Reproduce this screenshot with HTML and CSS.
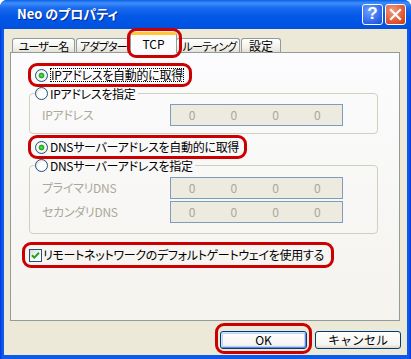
FILE: index.html
```html
<!DOCTYPE html>
<html lang="ja">
<head>
    <meta charset="UTF-8">
    <meta name="viewport" content="width=device-width, initial-scale=1.0">
    <title>Neo のプロパティ</title>
    <link rel="stylesheet" href="styles.css">
</head>
<body>
    <div class="window">
        <div class="titlebar">
            <span class="title">Neo のプロパティ</span>
            <span class="tb-btn help">?</span>
            <span class="tb-btn close">
                <svg width="19" height="19" viewBox="0 0 19 19">
                    <path d="M5 5 L14 14 M14 5 L5 14" stroke="#fff" stroke-width="2.2" stroke-linecap="square"/>
                </svg>
            </span>
        </div>

        <div class="client">
            <div class="tabs">
                <div class="tab t1">ユーザー名</div>
                <div class="tab t2">アダプター</div>
                <div class="tab active">TCP</div>
                <div class="tab t3">ルーティング</div>
                <div class="tab t4">設定</div>
            </div>

            <div class="panel">
                <div class="mark opt">
                    <span class="radio on"></span><span class="focus">IPアドレスを自動的に取得</span>
                </div>

                <fieldset class="group g1">
                    <legend class="opt"><span class="radio"></span>IPアドレスを指定</legend>
                    <div class="field">
                        <span class="label">IPアドレス</span>
                        <span class="ipbox"><span>0</span><span>0</span><span>0</span><span>0</span></span>
                    </div>
                </fieldset>

                <div class="mark opt m2">
                    <span class="radio on"></span>DNSサーバーアドレスを自動的に取得
                </div>

                <fieldset class="group g2">
                    <legend class="opt"><span class="radio"></span>DNSサーバーアドレスを指定</legend>
                    <div class="field">
                        <span class="label">プライマリDNS</span>
                        <span class="ipbox"><span>0</span><span>0</span><span>0</span><span>0</span></span>
                    </div>
                    <div class="field second">
                        <span class="label">セカンダリDNS</span>
                        <span class="ipbox"><span>0</span><span>0</span><span>0</span><span>0</span></span>
                    </div>
                </fieldset>

                <div class="mark opt m3">
                    <span class="check">
                        <svg width="11" height="11" viewBox="0 0 11 11">
                            <path d="M2 5.2 L4.3 7.6 L9 2.8" fill="none" stroke="#21A121" stroke-width="2"/>
                        </svg>
                    </span>リモートネットワークのデフォルトゲートウェイを使用する
                </div>
            </div>

            <div class="buttons">
                <button class="btn ok">OK</button>
                <button class="btn">キャンセル</button>
            </div>
        </div>
    </div>
</body>
</html>
```

FILE: styles.css
```css
* {
    box-sizing: border-box;
}

body {
    margin: 0;
    background: #fff;
    font-family: "Noto Sans CJK JP", "Liberation Sans", sans-serif;
    font-size: 12px;
    line-height: 14px;
    color: #000;
    font-feature-settings: "palt";
}

.window {
    width: 411px;
    height: 359px;
    display: flex;
    flex-direction: column;
    background: linear-gradient(to right, #0831D9 0, #0A5BEB 2px, #0A5BEB 409px, #0831D9 411px);
    border-radius: 7px 7px 0 0;
    overflow: hidden;
}

.titlebar {
    height: 29px;
    flex: none;
    display: flex;
    align-items: center;
    padding: 0 5px 1px 17px;
    background: linear-gradient(#0A5FE8 0, #3D8EF8 3px, #1A6AF0 8px, #0458E6 16px, #0054E3 24px, #0350DA 29px);
}
.title {
    flex: 1;
    color: #fff;
    font-size: 13px;
    font-weight: bold;
    text-shadow: 1px 1px #0A2B86;
}
.tb-btn {
    width: 21px;
    height: 21px;
    margin-left: 2px;
    border: 1px solid #fff;
    border-radius: 3px;
    display: flex;
    align-items: center;
    justify-content: center;
}
.help {
    background: radial-gradient(circle at 35% 30%, #6FA2FF, #2B63E8 70%, #1C4CCB);
    color: #fff;
    font-family: "Liberation Sans", sans-serif;
    font-size: 17px;
    font-weight: bold;
}
.close {
    background: radial-gradient(circle at 35% 30%, #F29B7E, #DE5430 65%, #C23A14);
}

.client {
    flex: 1;
    margin: 0 4px 4px;
    background: #ECE9D8;
    padding: 3px 7px 0 6px;
}

/* tabs */
.tabs {
    display: flex;
    align-items: flex-end;
    gap: 1px;
    height: 20px;
    padding-left: 2px;
    position: relative;
    z-index: 1;
}
.tab {
    height: 14px;
    border: 1px solid #919B9C;
    border-bottom: none;
    border-radius: 3px 3px 0 0;
    background: linear-gradient(#FFFFFF, #F3F2EC 60%, #E4E2D6);
    text-align: center;
    line-height: 14px;
    white-space: nowrap;
}
.t1, .t2, .t3 {
    font-size: 11px;
    letter-spacing: -0.8px;
}
.t1 { width: 63px; }
.t2 { width: 55px; text-align: left; padding-left: 3px; }
.t3 { width: 64px; padding-left: 3px; }
.t4 { width: 40px; }
.tab.active {
    position: relative;
    z-index: 2;
    width: 47px;
    height: 21px;
    margin: 0 -2px -1px;
    padding-top: 2px;
    border-top: 3px solid #FFC83C;
    background: #FCFCFE;
    line-height: 14px;
}
.tab.active::after {
    content: "";
    position: absolute;
    top: -7px;
    left: -4px;
    right: -6px;
    bottom: -5px;
    border: 3px solid #CC0000;
    border-radius: 9px;
}

.panel {
    height: 269px;
    border: 1px solid #919B9C;
    background: linear-gradient(#FCFCFE, #F4F3EE);
    padding: 10px 21px 0 18px;
    letter-spacing: -0.3px;
}

.mark {
    display: flex;
    align-items: center;
    width: fit-content;
    height: 24px;
    margin-left: -1px;
    padding: 0 5px 0 4px;
    border: 3px solid #CC0000;
    border-radius: 9px;
    white-space: nowrap;
}
.m2 {
    margin-top: 1px;
}
.m3 {
    height: 26px;
    margin-top: 8px;
    margin-left: -7px;
    padding-right: 7px;
}

.focus {
    outline: 1px dotted #000;
    outline-offset: -1px;
    padding: 0 1px;
}

.radio {
    display: inline-block;
    width: 13px;
    height: 13px;
    margin-right: 2px;
    border: 1px solid #1C5180;
    border-radius: 50%;
    background: radial-gradient(circle at 60% 60%, #fff 40%, #E6E5DD 75%, #D4D2C6);
    vertical-align: top;
}
.radio.on {
    background: radial-gradient(circle, #5FE25F 0, #21A121 2.5px, #E6F4E6 3.2px, #fff 45%, #E6E5DD 75%, #D4D2C6);
}
.check {
    display: inline-flex;
    align-items: center;
    justify-content: center;
    width: 13px;
    height: 13px;
    margin-right: 1px;
    border: 1px solid #1C5180;
    background: linear-gradient(135deg, #DCDBD3, #fff 70%);
}

/* group boxes */
.group {
    width: 349px;
    margin: 0;
    padding: 4px 34px 7px 12px;
    border: 1px solid #D0D0BF;
    border-radius: 4px;
    min-width: 0;
}
.g2 {
    padding-top: 5px;
    padding-bottom: 10px;
}
.group legend {
    margin-left: -7px;
    padding: 0 2px 0 0;
    line-height: 13px;
    white-space: nowrap;
}

.field {
    display: flex;
    align-items: center;
}
.field.second {
    margin-top: 2px;
}
.label {
    width: 128px;
    color: #ACA899;
}
.ipbox {
    display: flex;
    align-items: center;
    width: 173px;
    height: 22px;
    padding-right: 4px;
    border: 1px solid #7F9DB9;
    background: #EDEAE0;
    color: #ACA899;
}
.ipbox span {
    flex: 1;
    text-align: center;
}

/* bottom buttons */
.buttons {
    display: flex;
    justify-content: flex-end;
    gap: 8px;
    margin: 10px -1px 0 0;
}
.btn {
    width: 86px;
    height: 18px;
    padding: 0;
    border: 1px solid #003C74;
    border-radius: 3px;
    background: linear-gradient(#FFFFFF, #F5F4F0 80%, #DAD6CB);
    font-family: inherit;
    font-size: 12px;
    line-height: 14px;
    color: #000;
}
.btn.ok {
    position: relative;
    width: 87px;
    box-shadow: inset 1px 1px #CEE7FF, inset -1px -1px #6982EE, inset 0 0 0 2px #BCD4F6;
}
.btn.ok::after {
    content: "";
    position: absolute;
    top: -9px;
    left: -6px;
    right: -6px;
    bottom: -6px;
    border: 3px solid #CC0000;
    border-radius: 9px;
}
```
